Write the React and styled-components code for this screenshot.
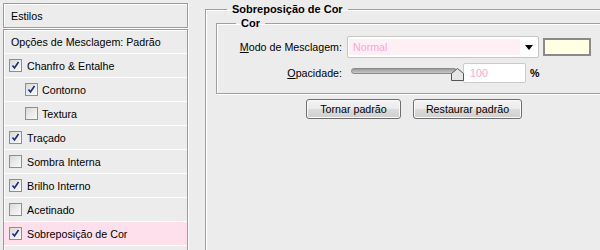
import React from "react";
import styled, { createGlobalStyle } from "styled-components";

const GlobalStyle = createGlobalStyle`
  html, body {
    margin: 0;
    background: #ececec;
    overflow: hidden;
  }
  body {
    font-family: "Liberation Sans", Arial, sans-serif;
    font-size: 10.7px;
    color: #000;
  }
`;

const Page = styled.div`
  display: flex;
  align-items: flex-start;
  gap: 17px;
  width: 640px;
  height: 250px;
  overflow: hidden;
`;

// left column
const Sidebar = styled.div`
  width: 185px;
  margin: 3px 0 0 3px;
  display: flex;
  flex-direction: column;
  gap: 1px;
  flex-shrink: 0;
`;

const Etched = styled.div`
  border: 1px solid #9c9c9c;
  box-shadow: inset 1px 1px 0 #fff, 1px 1px 0 #fff;
`;

const StylesHeader = styled(Etched)`
  height: 23px;
  display: flex;
  align-items: center;
  padding-left: 7px;
`;

const List = styled(Etched)`
  height: 240px;
`;

const Row = styled.div`
  height: 23px;
  display: flex;
  align-items: center;
  gap: ${(p) => (p.$indent ? "4px" : "5px")};
  padding-left: ${(p) => (p.$plain ? "7px" : p.$indent ? "21px" : "5px")};
  border-bottom: 1px solid #fff;
  background: ${(p) => (p.$active ? "#fde0ec" : "transparent")};
`;

const Box = styled.span`
  width: 11px;
  height: 11px;
  border: 1px solid #8e8f8f;
  background: linear-gradient(135deg, #d9d9d9, #fbfbfb);
  display: flex;
  align-items: center;
  justify-content: center;
  flex-shrink: 0;
`;

function Check({ on }) {
  return (
    <Box>
      {on && (
        <svg width="9" height="9" viewBox="0 0 9 9">
          <path d="M1.5 4.5 L3.5 7 L7.5 1" fill="none" stroke="#1b2a7c" strokeWidth="1.6" />
        </svg>
      )}
    </Box>
  );
}

// right column
const Group = styled.fieldset`
  margin: 2px 0 0 0;
  padding: 0 10px 0 10px;
  width: 420px;
  height: 260px;
  border: 1px solid #a0a0a0;
  box-shadow: inset 1px 1px 0 #fff, 1px 1px 0 #fff;
  min-width: 0;
`;

const Legend = styled.legend`
  font-weight: bold;
  font-size: 11px;
  line-height: 14px;
  padding: 0 5px;
  margin-left: ${(p) => p.$offset}px;
`;

const Inner = styled(Group)`
  margin: 0;
  width: auto;
  height: auto;
  padding: 6px 0 9px 0;
`;

const FormGrid = styled.div`
  display: grid;
  grid-template-columns: 125px auto;
  column-gap: 5px;
  row-gap: 4px;
  align-items: center;
`;

const Label = styled.label`
  text-align: right;
`;

const Control = styled.div`
  display: flex;
  align-items: center;
  height: 22px;
`;

const Select = styled.div`
  width: 190px;
  height: 20px;
  border: 1px solid #c6c6c6;
  border-radius: 2px;
  background: #fff;
  display: flex;
  align-items: center;
`;

const SelectValue = styled.div`
  flex: 1;
  align-self: stretch;
  margin: 2px 0 2px 1px;
  background: #fff0f6;
  color: #ffa6cf;
  display: flex;
  align-items: center;
  padding-left: 4px;
`;

const Arrow = styled.div`
  width: 18px;
  display: flex;
  justify-content: center;
`;

const Swatch = styled.div`
  width: 44px;
  height: 14px;
  margin-left: 4px;
  border: 2px solid #8a8a8a;
  background: #ffffe4;
`;

const Slider = styled.div`
  position: relative;
  width: 112px;
  height: 22px;
  margin-left: 4px;
`;

const Track = styled.div`
  position: absolute;
  left: 0;
  right: 6px;
  top: 6px;
  height: 4px;
  border: 1px solid #8a8a8a;
  border-radius: 3px;
  background: linear-gradient(#9a9a9a, #c8c8c8);
`;

const Thumb = styled.svg`
  position: absolute;
  left: 100px;
  top: 6px;
`;

const NumberField = styled.div`
  width: 55px;
  height: 18px;
  border: 1px solid #cbcbcb;
  border-radius: 2px;
  background: #fff;
  color: #ffa6cf;
  display: flex;
  align-items: center;
  padding-left: 6px;
  box-sizing: content-box;
`;

const Percent = styled.span`
  margin-left: 4px;
  font-weight: bold;
`;

const Buttons = styled.div`
  display: flex;
  gap: 12px;
  margin: 5px 0 0 90px;
`;

const Button = styled.button`
  height: 20px;
  width: ${(p) => p.$w}px;
  padding: 0;
  border: 1px solid #6f6f6f;
  border-radius: 3px;
  background: linear-gradient(#f3f3f3, #ebebeb 50%, #dcdcdc 50%, #cfcfcf);
  box-shadow: inset 0 0 0 1px #fafafa;
  font: inherit;
  color: #000;
`;

const items = [
  { label: "Chanfro & Entalhe", on: true },
  { label: "Contorno", on: true, indent: true },
  { label: "Textura", on: false, indent: true },
  { label: "Traçado", on: true },
  { label: "Sombra Interna", on: false },
  { label: "Brilho Interno", on: true },
  { label: "Acetinado", on: false },
  { label: "Sobreposição de Cor", on: true, active: true },
];

export default function App() {
  return (
    <>
      <GlobalStyle />
      <Page>
        <Sidebar>
          <StylesHeader>Estilos</StylesHeader>
          <List>
            <Row $plain>Opções de Mesclagem: Padrão</Row>
            {items.map((it, i) => (
              <Row key={i} $indent={it.indent} $active={it.active}>
                <Check on={it.on} />
                <span>{it.label}</span>
              </Row>
            ))}
            <Row />
          </List>
        </Sidebar>

        <Group>
          <Legend $offset={11}>Sobreposição de Cor</Legend>
          <Inner>
            <Legend $offset={19}>Cor</Legend>
            <FormGrid>
              <Label>
                <u>M</u>odo de Mesclagem:
              </Label>
              <Control>
                <Select>
                  <SelectValue>Normal</SelectValue>
                  <Arrow>
                    <svg width="8" height="5" viewBox="0 0 8 5">
                      <path d="M0 0 H8 L4 5 Z" fill="#000" />
                    </svg>
                  </Arrow>
                </Select>
                <Swatch />
              </Control>
              <Label>
                <u>O</u>pacidade:
              </Label>
              <Control>
                <Slider>
                  <Track />
                  <Thumb width="13" height="13" viewBox="0 0 13 13">
                    <path d="M0.5 5.5 L6.5 0.5 L12.5 5.5 V12.5 H0.5 Z" fill="#e6e6e6" stroke="#555" />
                  </Thumb>
                </Slider>
                <NumberField>100</NumberField>
                <Percent>%</Percent>
              </Control>
            </FormGrid>
          </Inner>
          <Buttons>
            <Button $w={95}>Tornar padrão</Button>
            <Button $w={109}>Restaurar padrão</Button>
          </Buttons>
        </Group>
      </Page>
    </>
  );
}
